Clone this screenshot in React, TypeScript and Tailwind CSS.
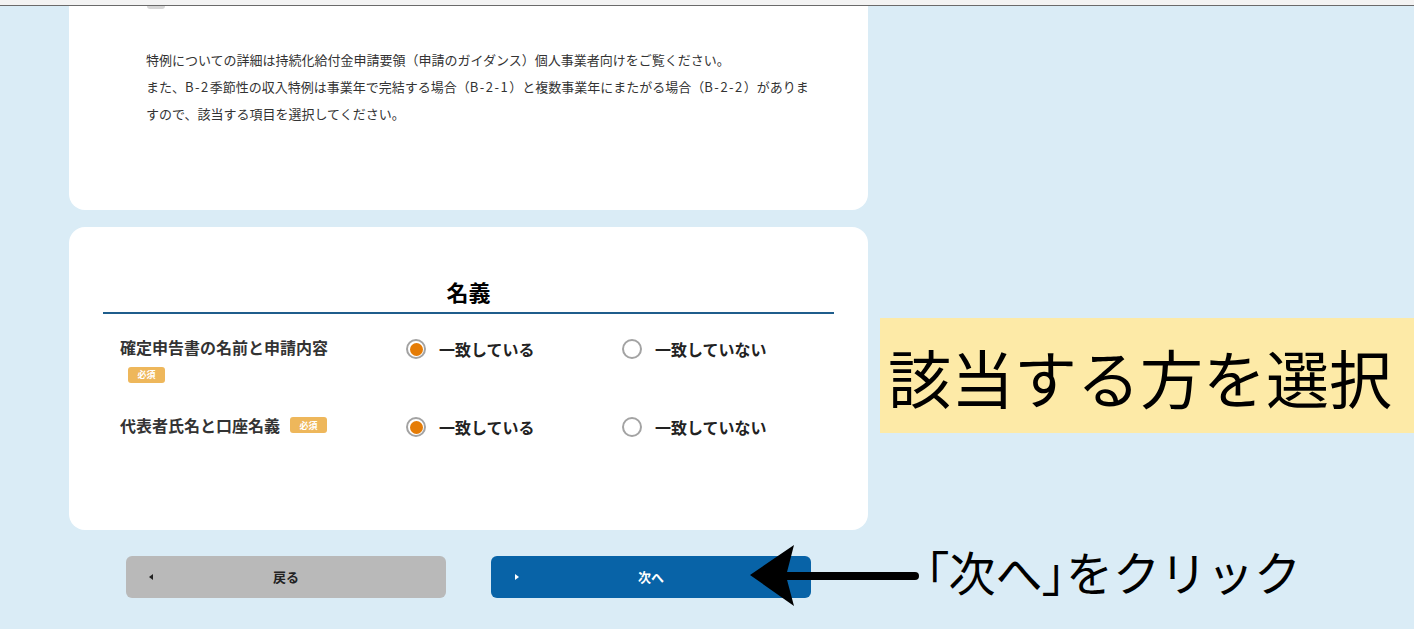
import React from 'react'

const jp = "font-['Meiryo','Noto_Sans_CJK_JP',sans-serif]"

function Badge() {
  return (
    <span className="inline-flex h-[16px] w-[37px] items-center justify-center rounded-[3px] bg-[#eeb75b] text-[9px] font-bold leading-none text-white">
      必須
    </span>
  )
}

function Radio({ checked, label }: { checked?: boolean; label: string }) {
  return (
    <label className="flex items-center gap-[13px]">
      <span className="flex h-[20px] w-[20px] items-center justify-center rounded-full border-2 border-[#a3a3a3] bg-white">
        {checked && <span className="h-[13px] w-[13px] rounded-full bg-[#e57c06]" />}
      </span>
      <span className="text-[16px] font-bold text-[#222]">{label}</span>
    </label>
  )
}

function Row({ label, badgeInline }: { label: string; badgeInline?: boolean }) {
  return (
    <div className="flex items-start">
      <div className="w-[303px] pl-[17px]">
        <div className="flex items-center gap-[10px] text-[16px] font-bold leading-[22px] text-[#333]">
          <span>{label}</span>
          {badgeInline && <Badge />}
        </div>
        {!badgeInline && (
          <div className="mt-[1px] pl-[8px]">
            <Badge />
          </div>
        )}
      </div>
      <div className="w-[216px] pt-px">
        <Radio checked label="一致している" />
      </div>
      <div className="pt-px">
        <Radio label="一致していない" />
      </div>
    </div>
  )
}

// latin runs are set a little wider, like the page's own font
const L = ({ children }: { children: React.ReactNode }) => (
  <span className="tracking-[1.5px]">{children}</span>
)

export default function App() {
  return (
    <div className={`relative h-[629px] w-[1414px] overflow-hidden bg-[#daecf6] ${jp}`}>
      {/* browser edge */}
      <div className="h-[6px] border-b border-[#6a6a6a] bg-[#f3f3f3]" />

      <div className="ml-[69px] w-[799px]">
        {/* notes card */}
        <div className="relative h-[204px] rounded-b-2xl bg-white pl-[77px] pr-[20px] pt-[40px]">
          <div className="absolute left-[78px] top-0 h-[3px] w-[18px] rounded-b-full bg-[#d6d6d6]" />
          <p className="text-[13px] leading-[27px] text-[#333]">
            特例についての詳細は持続化給付金申請要領（申請のガイダンス）個人事業者向けをご覧ください。
            <br />
            また、<L>B-2</L>季節性の収入特例は事業年で完結する場合（<L>B-2-1</L>）と複数事業年にまたがる場合（<L>B-2-2</L>）がありま
            <br />
            すので、該当する項目を選択してください。
          </p>
        </div>

        {/* 名義 card */}
        <div className="mt-[17px] h-[303px] rounded-2xl bg-white pt-[49px]">
          <div className="mx-[34px] border-b-2 border-[#1f5d8c] pb-[6px] text-center text-[22px] font-bold leading-[30px] text-black">
            名義
          </div>
          <div className="mx-[34px] mt-[22px] flex flex-col gap-[31px]">
            <Row label="確定申告書の名前と申請内容" />
            <Row label="代表者氏名と口座名義" badgeInline />
          </div>
        </div>

        {/* buttons */}
        <div className="mt-[26px] flex gap-[45px] pl-[57px]">
          <button className="relative flex h-[42px] w-[320px] items-center justify-center rounded-[6px] bg-[#b9b9b9] text-[13px] font-bold text-[#222]">
            <span className="absolute left-[23px] h-0 w-0 border-y-[3px] border-r-[4px] border-y-transparent border-r-[#222]" />
            戻る
          </button>
          <button className="relative flex h-[42px] w-[320px] items-center justify-center rounded-[6px] bg-[#0863a7] text-[13px] font-bold text-white">
            <span className="absolute left-[24px] h-0 w-0 border-y-[3px] border-l-[4px] border-y-transparent border-l-white" />
            次へ
          </button>
        </div>
      </div>

      {/* annotation: select */}
      <div className="absolute left-[880px] top-[318px] flex h-[115px] w-[560px] items-center bg-[#fdeaa7] pl-[8px]">
        <span className="text-[63px] font-normal leading-none text-black">該当する方を選択</span>
      </div>

      {/* annotation: arrow */}
      <svg className="absolute left-[745px] top-[540px]" width="180" height="70" viewBox="0 0 180 70">
        <line x1="40" y1="36" x2="170" y2="36" stroke="#000" strokeWidth="8" strokeLinecap="round" />
        <polygon points="5,35 49,5 41,36 49,66" fill="#000" />
      </svg>
      <div className="absolute left-[925px] top-[547px] text-[47px] leading-none text-black">
        <span className="[font-feature-settings:'palt']">「</span>次へ<span className="[font-feature-settings:'palt']">」</span>をクリック
      </div>
    </div>
  )
}
